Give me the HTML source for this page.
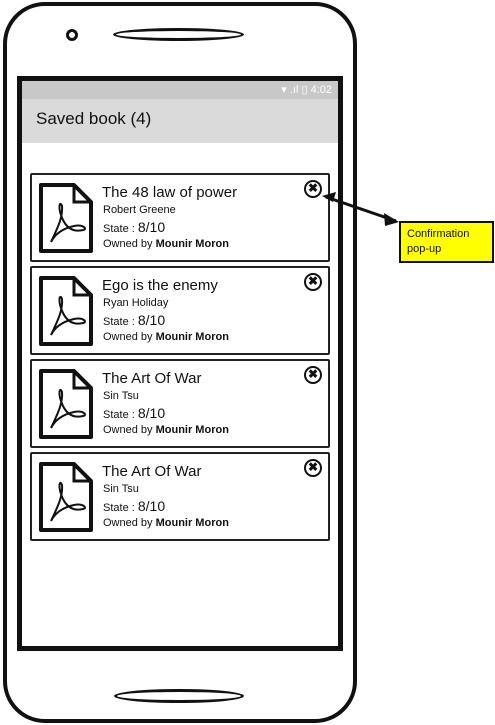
<!DOCTYPE html>
<html><head><style>
body{margin:0;width:495px;height:725px;background:#fff;position:relative;overflow:hidden;font-family:"Liberation Sans",sans-serif;color:#111}
.a{position:absolute;box-sizing:border-box}
.card{position:absolute;box-sizing:border-box;left:30px;width:300px;height:89px;border:2px solid #222;border-radius:2px;background:#fff}
.t{position:absolute;left:70px;top:9px;font-size:15px}
.au{position:absolute;left:71px;top:29px;font-size:11px}
.st{position:absolute;left:71px;top:44px;font-size:11px}
.st b{font-weight:normal;font-size:14px}
.ow{position:absolute;left:71px;top:63px;font-size:11px}
.x{position:absolute;right:6px;top:5px;width:18px;height:18px;border:2.5px solid #111;border-radius:50%;box-sizing:border-box;font-size:12px;font-weight:bold;line-height:13px;text-align:center}
svg.pdf{position:absolute;left:6px;top:7px}
</style></head><body>
<div class="a" style="left:3px;top:2px;width:354px;height:721px;border:4px solid #111;border-radius:42px"></div>
<div class="a" style="left:66px;top:29px;width:12px;height:12px;border:3px solid #111;border-radius:50%"></div>
<div class="a" style="left:113px;top:28px;width:131px;height:13px;border:3px solid #111;border-radius:50%"></div>
<div class="a" style="left:114px;top:689px;width:130px;height:14px;border:3px solid #111;border-radius:50%"></div>
<div class="a" style="left:17px;top:76px;width:326px;height:575px;border:5px solid #111;background:#fff"></div>
<div class="a" style="left:22px;top:81px;width:316px;height:18px;background:#c8c8c8;color:#fff;font-size:11px;text-align:right;padding-right:6px;line-height:18px">▾ .ıl ▯ 4:02</div>
<div class="a" style="left:22px;top:99px;width:316px;height:44px;background:#dadada;font-size:17px;padding:10px 0 0 14px">Saved book (4)</div>

<div class="card" style="top:173px"><svg class="pdf" width="56" height="72" viewBox="0 0 56 72"><path d="M3 3H36L53 20V69H3Z" fill="#fff" stroke="#111" stroke-width="4" stroke-linejoin="round"/><path d="M36 3V20H53" fill="none" stroke="#111" stroke-width="3"/><path d="M13 60C20 45 25 35 24 24C22 18 19 25 25 38C30 48 37 50 45 48C50 47 45 42 36 44C27 46 18 50 13 60" fill="none" stroke="#111" stroke-width="2"/></svg><div class="t">The 48 law of power</div><div class="au">Robert Greene</div><div class="st">State : <b>8/10</b></div><div class="ow">Owned by <strong>Mounir Moron</strong></div><div class="x">✖</div></div>
<div class="card" style="top:266px"><svg class="pdf" width="56" height="72" viewBox="0 0 56 72"><path d="M3 3H36L53 20V69H3Z" fill="#fff" stroke="#111" stroke-width="4" stroke-linejoin="round"/><path d="M36 3V20H53" fill="none" stroke="#111" stroke-width="3"/><path d="M13 60C20 45 25 35 24 24C22 18 19 25 25 38C30 48 37 50 45 48C50 47 45 42 36 44C27 46 18 50 13 60" fill="none" stroke="#111" stroke-width="2"/></svg><div class="t">Ego is the enemy</div><div class="au">Ryan Holiday</div><div class="st">State : <b>8/10</b></div><div class="ow">Owned by <strong>Mounir Moron</strong></div><div class="x">✖</div></div>
<div class="card" style="top:359px"><svg class="pdf" width="56" height="72" viewBox="0 0 56 72"><path d="M3 3H36L53 20V69H3Z" fill="#fff" stroke="#111" stroke-width="4" stroke-linejoin="round"/><path d="M36 3V20H53" fill="none" stroke="#111" stroke-width="3"/><path d="M13 60C20 45 25 35 24 24C22 18 19 25 25 38C30 48 37 50 45 48C50 47 45 42 36 44C27 46 18 50 13 60" fill="none" stroke="#111" stroke-width="2"/></svg><div class="t">The Art Of War</div><div class="au">Sin Tsu</div><div class="st">State : <b>8/10</b></div><div class="ow">Owned by <strong>Mounir Moron</strong></div><div class="x">✖</div></div>
<div class="card" style="top:452px"><svg class="pdf" width="56" height="72" viewBox="0 0 56 72"><path d="M3 3H36L53 20V69H3Z" fill="#fff" stroke="#111" stroke-width="4" stroke-linejoin="round"/><path d="M36 3V20H53" fill="none" stroke="#111" stroke-width="3"/><path d="M13 60C20 45 25 35 24 24C22 18 19 25 25 38C30 48 37 50 45 48C50 47 45 42 36 44C27 46 18 50 13 60" fill="none" stroke="#111" stroke-width="2"/></svg><div class="t">The Art Of War</div><div class="au">Sin Tsu</div><div class="st">State : <b>8/10</b></div><div class="ow">Owned by <strong>Mounir Moron</strong></div><div class="x">✖</div></div>

<svg class="a" style="left:0;top:0" width="495" height="725"><path d="M326 197L396 221" stroke="#111" stroke-width="3"/><path d="M322 196L336 192L333 202Z" fill="#111"/><path d="M399 222L384 213L385 226Z" fill="#111"/></svg>
<div class="a" style="left:399px;top:221px;width:95px;height:42px;background:#ffff00;border:2px solid #111;font-size:11px;padding:4px 0 0 6px;line-height:15px">Confirmation<br>pop-up</div>
</body></html>
